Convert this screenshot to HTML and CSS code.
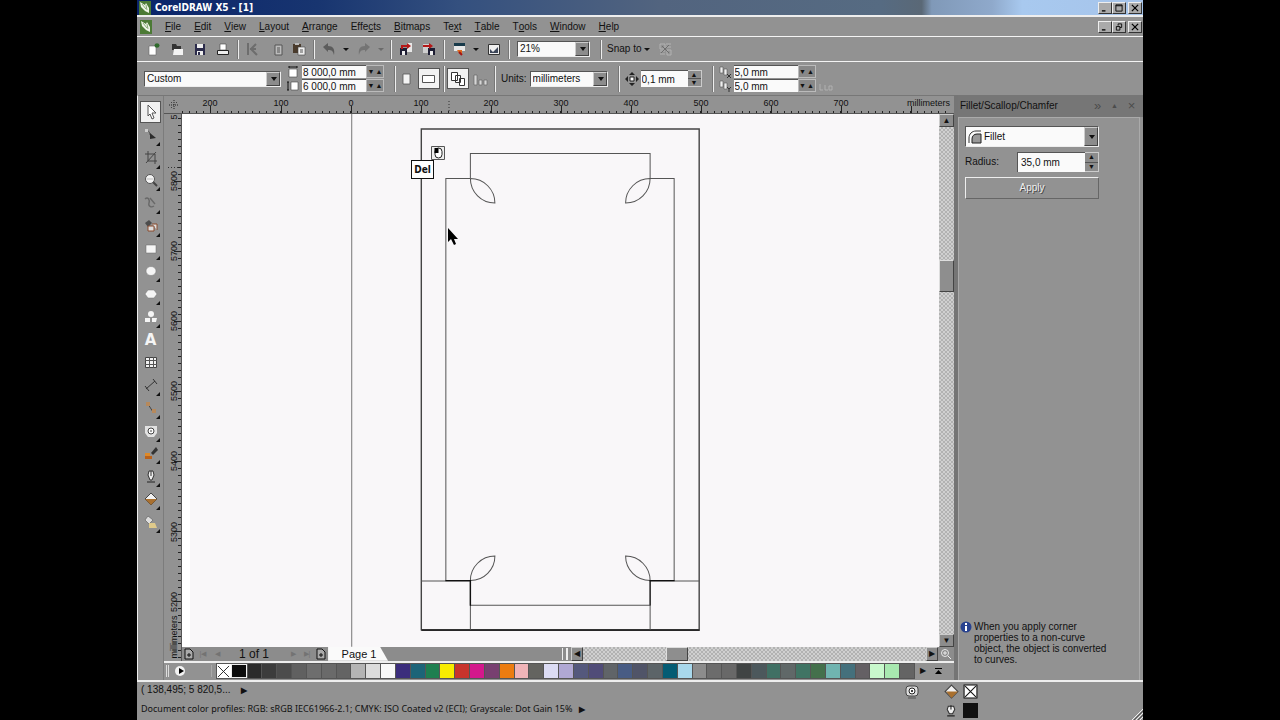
FILE: index.html
```html
<!DOCTYPE html>
<html lang="en">
<head>
<meta charset="utf-8">
<title>CorelDRAW X5 - [1]</title>
<link rel="stylesheet" href="styles.css">
</head>
<body>
<div class="app">
  <header class="titlebar">
    <svg class="logo" viewBox="0 0 12 14"><rect width="12" height="14" fill="#4c7a35"/><path d="M1 1l5 3 1-2 3 5v5l-4-2-4-4z" fill="#eef4e6"/><path d="M3 3l4 5M7 4l1 5" stroke="#5c8a46" stroke-width=".7" fill="none"/></svg>
    <h1>CorelDRAW X5 - [1]</h1>
    <div class="winbtns">
      <button aria-label="Minimize"><svg viewBox="0 0 9 9"><path d="M1 7h4v1.500H1z"/></svg></button>
      <button aria-label="Maximize"><svg viewBox="0 0 9 9"><path d="M1 1h7v7H1zM1 2h7" fill="none" stroke="#000"/></svg></button>
      <button class="close" aria-label="Close"><svg viewBox="0 0 9 9"><path d="M1 1l7 7M8 1l-7 7" stroke="#000" stroke-width="1.400"/></svg></button>
    </div>
  </header>

  <nav class="menubar">
    <svg class="logo" viewBox="0 0 12 14"><rect width="12" height="14" fill="#4c7a35"/><path d="M1 1l5 3 1-2 3 5v5l-4-2-4-4z" fill="#eef4e6"/><path d="M3 3l4 5M7 4l1 5" stroke="#5c8a46" stroke-width=".7" fill="none"/></svg>
    <button><u>F</u>ile</button><button><u>E</u>dit</button><button><u>V</u>iew</button><button><u>L</u>ayout</button><button><u>A</u>rrange</button><button>Effe<u>c</u>ts</button><button><u>B</u>itmaps</button><button>Te<u>x</u>t</button><button><u>T</u>able</button><button>T<u>o</u>ols</button><button><u>W</u>indow</button><button><u>H</u>elp</button>
    <div class="winbtns">
      <button aria-label="Minimize document"><svg viewBox="0 0 9 9"><path d="M1 7h4v1.500H1z"/></svg></button>
      <button aria-label="Restore document"><svg viewBox="0 0 9 9"><path d="M3.500 3V1h4v4h-2M1.500 4h4v4h-4z" fill="none" stroke="#000"/></svg></button>
      <button class="close" aria-label="Close document"><svg viewBox="0 0 9 9"><path d="M1 1l7 7M8 1l-7 7" stroke="#000" stroke-width="1.400"/></svg></button>
    </div>
  </nav>

  <div class="toolbar">
    <button class="tool" aria-label="New"><svg viewBox="0 0 16 16"><path d="M3 5h7v9H3z" fill="#fff" stroke="#666" stroke-width=".6"/><path d="M11 2v5M8.500 4.500h5M9 3l4 3M13 3L9 6" stroke="#2f6b2c" stroke-width="1.200"/></svg></button>
    <button class="tool" aria-label="Open"><svg viewBox="0 0 16 16"><path d="M3 3h4l1 2h4v4H3z" fill="#333"/><path d="M4 14l1-6h9v6z" fill="#f3f3f3"/></svg></button>
    <button class="tool" aria-label="Save"><svg viewBox="0 0 16 16"><path d="M3 3h10v11H3z" fill="#2b2b4a"/><path d="M5 3h6v4H5zM5 10h6v4H5z" fill="#eee"/><path d="M6 11h2v3H6z" fill="#2b2b4a"/></svg></button>
    <button class="tool" aria-label="Print"><svg viewBox="0 0 16 16"><path d="M5 3h6v6H5z" fill="#fff" stroke="#444" stroke-width=".6"/><path d="M2.500 9.500h11v4h-11z" fill="#eee" stroke="#222"/></svg></button>
    <i class="sep"></i>
    <button class="tool" aria-label="Cut"><svg viewBox="0 0 16 16"><path d="M3 2v12M5 8h6M11 3L6 8l6 6" stroke="#6d6d6d" stroke-width="2" fill="none"/></svg></button>
    <button class="tool" aria-label="Copy"><svg viewBox="0 0 16 16"><path d="M7 4h7v10H7z" fill="#bcbcbc" stroke="#555"/><path d="M9 7h3M9 9h3M9 11h3" stroke="#555"/></svg></button>
    <button class="tool" aria-label="Paste"><svg viewBox="0 0 16 16"><path d="M2 3h8v9H2z" fill="#4a3b2c"/><path d="M4 2h4v2H4z" fill="#bbb"/><path d="M7 6h7v8H7z" fill="#eee" stroke="#444" stroke-width=".6"/><path d="M9 9h3M9 11h3" stroke="#555"/></svg></button>
    <i class="sep"></i>
    <button class="tool" aria-label="Undo"><svg viewBox="0 0 16 16"><path d="M2 6l5-4v3c5 0 7 3 6 9-1-4-2-5-6-5v2z" fill="#5c5c5c"/></svg></button>
    <button class="drop" aria-label="Undo list"></button>
    <button class="tool" aria-label="Redo"><svg viewBox="0 0 16 16"><path d="M14 6L9 2v3C4 5 2 8 3 14c1-4 2-5 6-5v2z" fill="#747474"/></svg></button>
    <button class="drop faint" aria-label="Redo list"></button>
    <i class="sep"></i>
    <button class="tool" aria-label="Import"><svg viewBox="0 0 16 16"><path d="M9 2h5v9H9" fill="#e8e8e8"/><path d="M2 7h7v7H2z" fill="#1d1d33"/><path d="M4 10h3v4H4z" fill="#eee"/><path d="M3 4h6V2l4 3-4 3V6H5v2H3z" fill="#b51717"/></svg></button>
    <button class="tool" aria-label="Export"><svg viewBox="0 0 16 16"><path d="M2 3h6v9H2z" fill="#cfcfcf"/><path d="M7 7h7v7H7z" fill="#1d1d33"/><path d="M9 10h3v4H9z" fill="#eee"/><path d="M2 4h6V2l4 3-4 3V6H2z" fill="#b51717"/></svg></button>
    <i class="sep"></i>
    <button class="tool" aria-label="Application launcher"><svg viewBox="0 0 16 16"><path d="M3 2h11v8H3z" fill="#e6e6e6"/><path d="M3 2h11v3H3z" fill="#183a4a"/><path d="M6 9h5v5L8 12z" fill="#e06a1b"/><path d="M8 11l3 3" stroke="#a31515" stroke-width="2"/></svg></button>
    <button class="drop" aria-label="Launcher list"></button>
    <button class="tool" aria-label="Welcome screen"><svg viewBox="0 0 16 16"><path d="M2.500 3.500h11v10h-11z" fill="#eee" stroke="#333"/><path d="M4 8l3 3 5-5v6H4z" fill="#3c4659"/></svg></button>
    <i class="sep"></i>
    <span class="combo zoom"><select aria-label="Zoom level"><option>21%</option></select></span>
    <i class="sep wide"></i>
    <button class="snap">Snap to</button>
    <button class="drop" aria-label="Snap list"></button>
    <button class="tool" aria-label="Options"><svg viewBox="0 0 16 16"><path d="M3 3h5v5H3zM9 3h5M9 6h5M3 10h5M3 13h5M10 9h4v5h-4z" fill="none" stroke="#b2b2b2"/><path d="M5 5l7 7M12 4l-8 8" stroke="#6d6d6d"/></svg></button>
  </div>

  <div class="propbar">
    <span class="combo custom"><select aria-label="Page size"><option>Custom</option></select></span>
    <div class="pair">
      <label class="num"><svg viewBox="0 0 12 12"><path d="M2 3h8v8H2z" fill="#fff" stroke="#444" stroke-width=".6"/><path d="M2 1h8M2 0v2M10 0v2" stroke="#111"/></svg><input value="8 000,0 mm" aria-label="Page width"><span class="flat"><button aria-label="Decrease width">▼</button><button aria-label="Increase width">▲</button></span></label>
      <label class="num"><svg viewBox="0 0 12 12"><path d="M4 2h7v8H4z" fill="#fff" stroke="#444" stroke-width=".6"/><path d="M1 2v8M0 2h2M0 10h2" stroke="#111"/></svg><input value="6 000,0 mm" aria-label="Page height"><span class="flat"><button aria-label="Decrease height">▼</button><button aria-label="Increase height">▲</button></span></label>
    </div>
    <i class="sep tall lead"></i>
    <button class="tool" aria-label="Portrait"><svg viewBox="0 0 16 16"><path d="M4 3h7v10H4z" fill="#f4f4f4" stroke="#555" stroke-width=".8"/></svg></button>
    <button class="tool pressed" aria-label="Landscape"><svg viewBox="0 0 16 16"><path d="M1.500 4.500h12v7h-12z" fill="#fff" stroke="#555"/></svg></button>
    <i class="sep tall"></i>
    <button class="tool pressed" aria-label="All pages"><svg viewBox="0 0 16 16"><path d="M1.500 1.500h6v8h-6zM5.500 4.500h5v7h-5zM9.500 7.500h5v7h-5z" fill="#fff" stroke="#333"/></svg></button>
    <button class="tool" aria-label="Current page"><svg viewBox="0 0 16 16"><path d="M2 4h3v10H2zM7 9h3v5H7zM12 9h3v5h-3z" fill="#d6d6d6" stroke="#666" stroke-width=".7"/></svg></button>
    <i class="sep tall"></i>
    <label class="units" for="units">Units:</label>
    <span class="combo unitbox"><select id="units"><option>millimeters</option></select></span>
    <i class="sep tall wide"></i>
    <label class="num nudge"><svg viewBox="0 0 14 14"><path d="M5 5h4v4H5z" fill="#fff" stroke="#222"/><path d="M7 0l3 3H4zM7 14l3-3H4zM0 7l3-3v6zM14 7l-3-3v6z" fill="#222"/></svg><input value="0,1 mm" aria-label="Nudge distance"><span class="stack"><button aria-label="Increase nudge">▲</button><button aria-label="Decrease nudge">▼</button></span></label>
    <i class="sep tall wide"></i>
    <div class="pair dup">
      <label class="num"><svg viewBox="0 0 12 12"><path d="M1 1h3v6H1zM5 3h3v6H5z" fill="#eee" stroke="#555" stroke-width=".6"/><path d="M8 8l4 4M12 8l-4 4" stroke="#333"/></svg><input value="5,0 mm" aria-label="Duplicate distance X"><span class="flat"><button aria-label="Decrease X">▼</button><button aria-label="Increase X">▲</button></span></label>
      <label class="num"><svg viewBox="0 0 12 12"><path d="M1 1h3v6H1zM5 3h3v6H5z" fill="#eee" stroke="#555" stroke-width=".6"/><path d="M8 7l2 2 2-2M10 9v3" stroke="#333" fill="none"/></svg><input value="5,0 mm" aria-label="Duplicate distance Y"><span class="flat"><button aria-label="Decrease Y">▼</button><button aria-label="Increase Y">▲</button></span></label>
    </div>
    <svg class="treat" viewBox="0 0 14 8"><path d="M1 1v6h3M6 2v5h3M10 3h3v4h-3z" fill="none" stroke="#b0b0b0"/></svg>
  </div>

  <div class="main">
    <div class="work">
      <aside class="toolbox">
        <button class="tool pressed" aria-label="Pick"><svg viewBox="0 0 16 16"><path d="M5 1l8 8H9l2 5-2 1-2-5-2 2z" fill="#fff" stroke="#555"/></svg></button>
        <button class="tool fly" aria-label="Shape"><svg viewBox="0 0 16 16"><path d="M3 3c2 0 4 2 4 5" stroke="#555" fill="none"/><path d="M2 2h3v3H2z" fill="#ccc"/><path d="M7 6l6 5-6 1z" fill="#2c2c2c"/></svg></button>
        <button class="tool fly" aria-label="Crop"><svg viewBox="0 0 16 16"><path d="M2 4h10v10M5 1v10h9M3 13L13 2" stroke="#454545" fill="none"/></svg></button>
        <button class="tool fly" aria-label="Zoom"><svg viewBox="0 0 16 16"><path d="M9 9l5 5" stroke="#444" stroke-width="2"/><circle cx="7" cy="7" r="4.500" fill="#f2f2f2" stroke="#555"/><path d="M4 7h6" stroke="#bbb"/></svg></button>
        <button class="tool fly" aria-label="Freehand"><svg viewBox="0 0 16 16"><path d="M2 4c3-3 5 1 4 4s2 5 5 3M7 3l5 6" stroke="#696969" stroke-width="1.400" fill="none"/></svg></button>
        <button class="tool fly" aria-label="Smart fill"><svg viewBox="0 0 16 16"><path d="M2 5l4-3 3 3-4 4z" fill="#4c4c4c"/><path d="M5 8h6v5H5zM9 6h5v6" fill="#ddd" stroke="#8a4b2c"/></svg></button>
        <button class="tool fly" aria-label="Rectangle"><svg viewBox="0 0 16 16"><path d="M3 4h10v8H3z" fill="#f5f5f5" stroke="#666" stroke-width=".5"/></svg></button>
        <button class="tool fly" aria-label="Ellipse"><svg viewBox="0 0 16 16"><ellipse cx="8" cy="8" rx="5" ry="4.500" fill="#f5f5f5" stroke="#777" stroke-width=".5"/></svg></button>
        <button class="tool fly" aria-label="Polygon"><svg viewBox="0 0 16 16"><path d="M5 4h6l3 4-3 4H5L2 8z" fill="#f5f5f5" stroke="#777" stroke-width=".5"/></svg></button>
        <button class="tool fly" aria-label="Basic shapes"><svg viewBox="0 0 16 16"><circle cx="8" cy="5" r="3" fill="#f5f5f5"/><path d="M2 9h5v4H2zM9 9h5l-1 4H9z" fill="#f5f5f5"/></svg></button>
        <button class="tool glyph" aria-label="Text">A</button>
        <button class="tool" aria-label="Table"><svg viewBox="0 0 16 16"><path d="M2.500 3.500h11v10h-11z" fill="#f2f2f2" stroke="#444"/><path d="M2 6.500h12M2 10.500h12M6.500 3v11M10.500 3v11" stroke="#555"/></svg></button>
        <button class="tool fly" aria-label="Dimension"><svg viewBox="0 0 16 16"><path d="M3 12l9-8M2 9l4 5M10 2l4 5" stroke="#333" fill="none"/></svg></button>
        <button class="tool fly" aria-label="Connector"><svg viewBox="0 0 16 16"><path d="M5 4l5 8" stroke="#444"/><path d="M3 2h4v4H3zM9 9h4v4H9z" fill="#b6895c"/></svg></button>
        <button class="tool fly" aria-label="Interactive"><svg viewBox="0 0 16 16"><path d="M2 3h12v7l-3 4H5l-3-4z" fill="#e2e2e2"/><circle cx="8" cy="8" r="3" fill="#fff" stroke="#444"/><path d="M7 8h2" stroke="#444"/></svg></button>
        <button class="tool fly" aria-label="Eyedropper"><svg viewBox="0 0 16 16"><path d="M8 8l5-6 2 3-5 5z" fill="#333"/><path d="M2 8h5v6H2z" fill="#dd8a2a"/><path d="M2 11h7v3H2z" fill="#b9611b"/></svg></button>
        <button class="tool fly" aria-label="Outline"><svg viewBox="0 0 16 16"><path d="M6 3h4l1 4-2 5H7L5 7z" fill="#eee" stroke="#333"/><path d="M8 3v5" stroke="#333"/><path d="M4 14h8" stroke="#222"/></svg></button>
        <button class="tool fly" aria-label="Fill"><svg viewBox="0 0 16 16"><path d="M8 2l6 6-6 6-6-6z" fill="#f1f1f1" stroke="#444"/><path d="M2 8h12l-6 6z" fill="#a9702f"/></svg></button>
        <button class="tool fly" aria-label="Interactive fill"><svg viewBox="0 0 16 16"><path d="M5 2l5 4-4 4-4-4z" fill="#ddd" stroke="#555" stroke-width=".6"/><path d="M6 9h6l2 5H6z" fill="#dfca8b"/></svg></button>
      </aside>

      <section class="center">
        <div class="hruler">
          <svg viewBox="164 96 790 18" preserveAspectRatio="xMinYMin slice">
            <path d="M169 105h10M174 100v10M171 102l1 1M177 102l-1 1M171 108l1-1" stroke="#222" stroke-dasharray="1 1" fill="none"/>
            <path d="M182 112.500h768" stroke="#222" stroke-width="3" stroke-dasharray="1 6"/>
            <path d="M210.500 106v8M281.500 106v8M351.500 106v8M421.500 106v8M491.500 106v8M561.500 106v8M631.500 106v8M701.500 106v8M771.500 106v8M841.500 106v8M911.500 106v8" stroke="#222"/>
            <path d="M449 101v12" stroke="#333" stroke-dasharray="1 2"/>
            <g class="rulertext" text-anchor="middle"><text x="210" y="106">200</text><text x="281" y="106">100</text><text x="351" y="106">0</text><text x="421" y="106">100</text><text x="491" y="106">200</text><text x="561" y="106">300</text><text x="631" y="106">400</text><text x="701" y="106">500</text><text x="771" y="106">600</text><text x="841" y="106">700</text></g>
            <text class="rulertext" x="950" y="106" text-anchor="end">millimeters</text>
          </svg>
        </div>

        <div class="desk">
          <div class="vruler">
            <svg viewBox="164 114 18 546" preserveAspectRatio="xMinYMin slice">
              <path d="M179.500 118v540" stroke="#222" stroke-width="3" stroke-dasharray="1 6"/>
              <path d="M174 181.500h8M174 251.500h8M174 321.500h8M174 391.500h8M174 461.500h8M174 531.500h8M174 601.500h8" stroke="#222"/>
              <path d="M168 167.500h13" stroke="#333" stroke-dasharray="1 2"/>
              <g class="rulertext" text-anchor="middle"><text transform="translate(177 181) rotate(-90)">5800</text><text transform="translate(177 251) rotate(-90)">5700</text><text transform="translate(177 321) rotate(-90)">5600</text><text transform="translate(177 391) rotate(-90)">5500</text><text transform="translate(177 461) rotate(-90)">5400</text><text transform="translate(177 532) rotate(-90)">5300</text><text transform="translate(177 602) rotate(-90)">5200</text><text transform="translate(177 637) rotate(-90)">millimeters</text><text transform="translate(177 117) rotate(-90)">5</text></g>
            </svg>
          </div>
          <div class="view">
            <div class="viewtop">
              <div class="canvas">
                <svg class="drawing" viewBox="182 114 756 532" preserveAspectRatio="xMinYMin meet" fill="none" stroke="#555">
                  <path d="M351.500 114v532" stroke="#777"/>
                  <path d="M421 129h277.500v500H421z" stroke="#444" stroke-width="1.400"/>
                  <path d="M421 629.500h278" stroke="#000"/>
                  <path d="M470 178.500v-25h179.500v25h24v401.500M470 178.500h-24.500v401.500"/>
                  <path d="M470 178.500a24.500 24.500 0 0 0 24.500 24.500a24.500 24.500 0 0 0 -24.500 -24.500M649.500 178.500a24.500 24.500 0 0 1 -24.500 24.500a24.500 24.500 0 0 1 24.500 -24.500M470 580a24.500 24.500 0 0 1 24.500 -24.500a24.500 24.500 0 0 1 -24.500 24.500M649.500 580a24.500 24.500 0 0 0 -24.500 -24.500a24.500 24.500 0 0 0 24.500 24.500"/>
                  <path d="M421 580.500h49M649 580.500h50M470 580v49M649.500 605v24M470 604.500h179"/>
                  <path d="M445 580h25v25M674 580h-24.500v25" stroke="#111" stroke-width="1.400"/>
                </svg>
                <svg class="click" viewBox="0 0 14 14"><path d="M.5.5h13v13H.5z" fill="#eee" stroke="#555"/><rect x="4" y="2" width="7" height="10" rx="3.500" fill="#fff" stroke="#222"/><path d="M3.500 2h4v5h-4z"/></svg>
                <kbd class="key">Del</kbd>
                <svg class="cursor" viewBox="0 0 10 18"><path d="M0 0v14l3-3 3 6 2-1-2-5h4z"/></svg>
              </div>
              <div class="vscroll">
                <button aria-label="Scroll up">▲</button><div class="track"><div class="thumb"></div></div><button aria-label="Scroll down">▼</button>
              </div>
            </div>
            <div class="pagenav">
              <button class="addpage" aria-label="Add page before"><svg viewBox="0 0 12 12"><path d="M2 1h5l3 3v7H2zM4 7h4M6 5v4" fill="#aaa" stroke="#111"/></svg></button>
              <button class="step" aria-label="First page">|◀</button>
              <button class="step" aria-label="Previous page">◀</button>
              <span class="count">1 of 1</span>
              <button class="step" aria-label="Next page">▶</button>
              <button class="step" aria-label="Last page">▶|</button>
              <button class="addpage" aria-label="Add page after"><svg viewBox="0 0 12 12"><path d="M2 1h5l3 3v7H2zM4 7h4M6 5v4" fill="#aaa" stroke="#111"/></svg></button>
              <button class="tab">Page 1</button>
              <i class="grip"></i>
              <div class="hscroll">
                <button aria-label="Scroll left">◀</button><div class="track"><div class="thumb"></div></div><button aria-label="Scroll right">▶</button>
              </div>
              <button class="navigator" aria-label="Navigator"><svg viewBox="0 0 12 12"><circle cx="5" cy="5" r="3.500" fill="#888" stroke="#e8e8e8"/><path d="M3 5h4M5 3v4M8 8l3 3" stroke="#eee"/></svg></button>
            </div>
          </div>
        </div>

        <div class="palette">
          <div class="lead">
            <i class="bar"></i>
            <button aria-label="Palette menu"><svg viewBox="0 0 12 12"><circle cx="6" cy="6" r="5" fill="#f2f2f2"/><path d="M5 3l5 3-5 3z"/></svg></button>
            <i class="bar dim"></i>
          </div>
          <div class="swatches" id="swatches"></div>
          <button class="more" aria-label="Scroll colors">▶</button>
          <button class="more" aria-label="Expand palette"><svg viewBox="0 0 9 9"><path d="M1 1.500h7" stroke="#000"/><path d="M4.500 3L8 7H1z"/></svg></button>
        </div>
      </section>
    </div>

    <aside class="docker">
      <header>
        <h2>Fillet/Scallop/Chamfer</h2>
        <button aria-label="Collapse">»</button><button class="up" aria-label="Roll up">▲</button><button aria-label="Close docker">×</button>
      </header>
      <div class="panel">
        <form>
          <span class="combo mode"><svg viewBox="0 0 14 14"><path d="M1 13V8c0-4 3-7 7-7h5" fill="none" stroke="#333"/><path d="M4 13V9c0-3 2-5 5-5h4v9z" fill="#999" stroke="#222"/></svg><select aria-label="Corner type"><option>Fillet</option></select></span>
          <div class="radius"><label for="radius">Radius:</label><span class="num"><input id="radius" value="35,0 mm"><span class="stack"><button type="button" aria-label="Increase radius">▲</button><button type="button" aria-label="Decrease radius">▼</button></span></span></div>
          <button type="button" class="apply">Apply</button>
        </form>
        <div class="info">
          <svg viewBox="0 0 12 12"><circle cx="6" cy="6" r="5.500" fill="#27418f"/><path d="M5 5h2v5H5zM5 2h2v2H5z" fill="#fff"/></svg>
          <p>When you apply corner<br>properties to a non-curve<br>object, the object is converted<br>to curves.</p>
        </div>
      </div>
    </aside>
  </div>

  <footer class="status">
    <div class="msgs">
      <p><span class="coords">( 138,495; 5 820,5...</span> <b>▶</b></p>
      <p class="profiles">Document color profiles: RGB: sRGB IEC61966-2.1; CMYK: ISO Coated v2 (ECI); Grayscale: Dot Gain 15% <b>▶</b></p>
    </div>
    <svg class="proof" viewBox="0 0 14 14"><rect x="1" y="1" width="12" height="10" rx="3" fill="#ddd" stroke="#444"/><circle cx="7" cy="6" r="3" fill="#fff" stroke="#222"/><circle cx="7" cy="6" r="1"/><path d="M3 13h8" stroke="#555"/></svg>
    <div class="inks">
      <svg viewBox="0 0 14 14"><path d="M7 1l6 6-6 6-6-6z" fill="#f1f1f1" stroke="#444"/><path d="M2 7h11l-6 6z" fill="#a9702f"/></svg>
      <svg viewBox="0 0 14 14"><path d="M1 1h12v12H1z" fill="#fff" stroke="#111"/><path d="M2 2l10 10M12 2L2 12" stroke="#111"/></svg>
      <svg viewBox="0 0 14 14"><path d="M4 3h5l1 3-2 4H5L3 6z" fill="#eee" stroke="#333"/><path d="M6.500 2v4M3 12h7" stroke="#222"/></svg>
      <svg viewBox="0 0 14 14"><path d="M0 0h14v14H0z" fill="#111"/></svg>
    </div>
    <svg class="resize" viewBox="0 0 12 12"><path d="M1 12L12 1M5 12l7-7M9 12l3-3" stroke="#eee"/><path d="M3 12l9-9M7 12l5-5" stroke="#555"/></svg>
  </footer>
</div>
<script src="palette.js"></script>
</body>
</html>
```

FILE: palette.js
```js
const colors = ["none", "#0c0c0c", "#2b2b2b", "#3c3c3c", "#4c4c4c", "#606060", "#6e6e6e", "#6a6a6a", "#646464", "#b4b4b4", "#dcdcdc", "#f8f8f8",
  "#3b2d7c", "#1c6478", "#1e7f50", "#f8ec00", "#c8342c", "#d4188c", "#784070", "#ec7c10", "#f0b4b8", "#646460", "#dcdcf4", "#b0a8d4",
  "#54587c", "#504c78", "#606468", "#485c84", "#505468", "#5c6468", "#045c74", "#a8d8ec", "#8c8c8c", "#6c6c6c", "#686868", "#404444",
  "#4c585c", "#407064", "#606868", "#407464", "#44704c", "#70b4b0", "#44707c", "#646064", "#c8f8cc", "#a8e8b0", "#646464"];
const row = document.getElementById("swatches");
for (const color of colors) {
  const swatch = document.createElement("button");
  swatch.setAttribute("aria-label", color === "none" ? "No color" : color);
  if (color === "none") {
    swatch.className = "nocolor";
    swatch.innerHTML = '<svg viewBox="0 0 14 14"><path d="M1 1l12 12M13 1L1 13" stroke="#222"/></svg>';
  } else {
    swatch.style.background = color;
  }
  row.append(swatch);
}
```

FILE: styles.css
```css
* { box-sizing: border-box; }
body { margin: 0; background: #000; color: #111; font: 10px/12px "Liberation Sans", Arial, sans-serif; }
button, input, select { font: inherit; color: inherit; margin: 0; padding: 0; border: 0; border-radius: 0; background: none; appearance: none; min-width: 0; }
button { display: flex; align-items: center; justify-content: center; }
h1, h2, p { margin: 0; font-size: inherit; font-weight: normal; }
svg { display: block; flex: none; }

.app { display: flex; flex-direction: column; min-height: 100vh; margin: 0 137px; background: #929292; border-bottom: 1px solid #f4f4f4; }

.titlebar { display: flex; align-items: center; gap: 4px; height: 15px; padding: 0 1px 0 2px; color: #fff;
  background: linear-gradient(90deg, #0a246a 0%, #183570 18%, #34507f 32%, #52647f 52%, #566b82 74%, #5a6876 78%, #8099b8 79%, #8fa9cb 85%, #a8c9ef 88%, #a6c4ea 100%); }
.titlebar h1 { flex: 1; font: bold 10px/14px "DejaVu Sans Condensed", "DejaVu Sans", sans-serif; }
.logo { width: 12px; height: 14px; }
.winbtns { display: flex; }
.winbtns button { width: 14px; height: 12px; background: #aaa; border: 1px solid; border-color: #eee #333 #333 #eee; }
.winbtns .close { margin-left: 2px; }
.winbtns svg { width: 8px; height: 8px; }

.menubar { display: flex; align-items: center; height: 22px; padding: 0 1px 0 3px; border-top: 2px solid #eee; border-bottom: 1px solid #f4f4f4; }
.menubar > button { margin-right: 13px; height: 16px; }
.menubar .logo { margin-right: 13px; }
.menubar u { text-underline-offset: 1px; }
.menubar .winbtns { margin-left: auto; }

.toolbar, .propbar { display: flex; align-items: center; padding: 0 5px; }
.toolbar { height: 25px; border-bottom: 1px solid #f4f4f4; }
.propbar { height: 33px; padding-left: 7px; }
.tool { position: relative; width: 23px; height: 21px; flex: none; }
.propbar .tool { width: 22px; }
.tool svg { width: 16px; height: 16px; }
.pressed { background: #f2f2f2; border: 1px solid #555; }
.sep { width: 2px; height: 19px; margin: 0 2px 0 3px; background: #eee; border-left: 1px solid #777; flex: none; }
.sep.tall { height: 26px; }
.sep.wide { margin: 0 5px 0 10px; }
.propbar .sep.lead { margin: 0 0 0 10px; }
.drop { width: 12px; height: 16px; flex: none; }
.drop::after { content: ""; border: 3px solid transparent; border-top-color: #111; border-bottom: 0; }
.drop.faint { opacity: .3; }
.snap { height: 16px; }

.combo { position: relative; display: flex; align-items: center; height: 16px; background: #fafafa; border: 1px solid; border-color: #555 #eee #eee #555; }
.combo select { width: 100%; height: 14px; padding-left: 2px; }
.combo::before { content: ""; position: absolute; right: 0; top: 0; bottom: 0; width: 12px; background: #8c8c8c; border: 1px solid; border-color: #ccc #444 #444 #ccc; pointer-events: none; }
.combo::after { content: ""; position: absolute; right: 3px; top: 50%; margin-top: -2px; border: 3px solid transparent; border-top: 4px solid #111; border-bottom: 0; pointer-events: none; }
.combo.zoom { width: 73px; margin-left: 5px; }
.combo.custom { width: 137px; }
.combo.unitbox { width: 78px; margin-left: 3px; }
.units { margin-left: 3px; }

.pair { display: flex; flex-direction: column; gap: 1px; margin-left: 6px; }
.num { display: flex; align-items: center; gap: 3px; }
.num svg { width: 12px; height: 12px; }
.num input { width: 64px; height: 13px; padding: 0 1px; background: #fafafa; border-top: 1px solid #555; }
.num .flat { display: flex; height: 13px; margin-left: -3px; background: #888; border: 1px solid #bbb; }
.flat button { width: 8px; font-size: 7px; line-height: 8px; }
.num.nudge { gap: 2px; }
.nudge svg { width: 14px; height: 14px; }
.nudge input { width: 48px; height: 17px; }
.stack { display: flex; flex-direction: column; align-self: stretch; margin-left: -3px; width: 14px; background: #666; border: 1px solid #ccc; border-left: 0; }
.stack button { flex: 1; font-size: 7px; line-height: 6px; background: #8c8c8c; }
.stack button + button { border-top: 1px solid #555; }
.pair.dup { margin-left: 0; }
.treat { width: 14px; height: 8px; margin: 16px 0 0 3px; }

.main { display: flex; flex: 1; border-bottom: 2px solid #eee; }
.work { display: flex; flex: 1; min-width: 0; border-top: 1px solid #777; border-left: 1px solid #eee; }
.toolbox { display: flex; flex-direction: column; justify-content: space-between; align-items: center; width: 25px; height: 437px; padding-top: 5px; flex: none; }
.toolbox .tool { width: 21px; height: 22px; }
.fly::after { content: ""; position: absolute; right: 1px; bottom: 0; border: 2px solid; border-color: transparent #111 #111 transparent; }
.glyph { font: bold 15px/20px "DejaVu Sans", sans-serif; color: #f5f5f5; }

.center { display: flex; flex-direction: column; flex: 1; min-width: 0; border-left: 1px solid #7c7c7c; }
.hruler { height: 18px; border-bottom: 1px solid #555; overflow: hidden; }
.hruler svg { width: 100%; height: 18px; }
.rulertext { font: 9px "Liberation Sans", Arial, sans-serif; fill: #111; }
.desk { display: flex; flex: 1; min-height: 0; }
.vruler { width: 18px; border-right: 1px solid #555; overflow: hidden; flex: none; }
.vruler svg { width: 18px; height: 546px; }
.view { display: flex; flex-direction: column; flex: 1; min-width: 0; }
.viewtop { display: flex; flex: 1; }
.canvas { position: relative; flex: 1; background: #f9f7f9; border: 0 solid #fff; border-left-width: 8px; overflow: hidden; }
.drawing { width: calc(100% + 8px); margin-left: -8px; }
.key { position: absolute; left: 221px; top: 46px; width: 23px; height: 19px; border: 1px solid #111; background: #fff; font: bold 10px/17px "DejaVu Sans Condensed", "DejaVu Sans", sans-serif; text-align: center; }
.click { position: absolute; left: 241px; top: 32px; width: 14px; height: 14px; }
.cursor { position: absolute; left: 258px; top: 114px; width: 10px; height: 18px; }

.vscroll { display: flex; flex-direction: column; width: 15px; flex: none; }
.vscroll button, .hscroll button { width: 15px; height: 13px; background: #8c8c8c; border: 1px solid; border-color: #ccc #444 #444 #ccc; font-size: 8px; line-height: 9px; flex: none; }
.track { flex: 1; background: repeating-conic-gradient(#b2b2b2 0 25%, #d0d0d0 0 50%) 0 0 / 4px 4px; }
.thumb { background: #8e8e8e; border: 1px solid; border-color: #ddd #444 #444 #ddd; }
.vscroll .track { padding-top: 133px; }
.vscroll .thumb { height: 32px; }
.pagenav { display: flex; align-items: center; height: 14px; background: #8c8c8c; }
.addpage { width: 14px; }
.addpage svg, .navigator svg { width: 12px; height: 12px; }
.step { width: 14px; color: #737373; font-size: 7px; }
.count { padding: 0 17px 0 15px; font-size: 12px; line-height: 14px; }
.tab { width: 60px; height: 14px; padding-left: 2px; background: #fafafa; font-size: 11px; clip-path: polygon(0 0, 52px 0, 100% 100%, 0 100%); }
.grip { width: 6px; height: 12px; margin: 0 3px 0 auto; border: 1px solid #eee; border-width: 0 2px 0 1px; }
.hscroll { display: flex; width: 367px; }
.hscroll button { width: 12px; height: 14px; }
.hscroll .track { padding-left: 83px; }
.hscroll .thumb { width: 22px; height: 14px; }
.navigator { width: 16px; }

.palette { display: flex; align-items: center; height: 19px; border-top: 2px solid #eee; }
.palette .lead { display: flex; align-items: center; width: 52px; padding: 0 2px; gap: 5px; }
.lead button svg { width: 12px; height: 12px; }
.bar { width: 3px; height: 12px; border: 1px solid #ddd; border-width: 0 1px; }
.bar.dim { margin-left: auto; border-color: #aaa; border-right: 0; }
.swatches { display: flex; flex: 1; height: 16px; border: 1px solid #555; border-left: 0; }
.swatches button { flex: 1; border-left: 1px solid #555; }
.swatches .nocolor { background: #fff; }
.nocolor svg { width: 13px; height: 13px; }
.swatches button:nth-child(2) { border: 1px solid #eee; }
.more { width: 16px; font-size: 8px; }
.more + .more { width: 23px; padding-right: 8px; }
.more svg { width: 9px; height: 9px; }

.docker { display: flex; flex-direction: column; width: 189px; border-left: 4px solid #757575; flex: none; }
.docker header { display: flex; align-items: center; height: 22px; padding: 0 3px 0 2px; background: #767676; }
.docker h2 { flex: 1; }
.docker header button { width: 17px; color: #4c4c4c; font-size: 13px; }
.docker header .up { font-size: 7px; }
.panel { display: flex; flex-direction: column; justify-content: space-between; flex: 1; margin-right: 3px; padding: 8px 6px 15px; border: 1px solid #aaa; border-width: 1px 1px 0; }
.panel form { display: flex; flex-direction: column; gap: 5px; width: 134px; }
.combo.mode { height: 21px; }
.mode svg { width: 14px; height: 14px; margin-left: 2px; }
.mode select { height: 19px; }
.radius { display: flex; align-items: center; justify-content: space-between; }
.radius input { width: 68px; height: 20px; padding-left: 3px; border-left: 1px solid #555; }
.apply { height: 22px; border: 1px solid; border-color: #eee #666 #666 #eee; color: #eee; text-shadow: 1px 1px #444; }
.info { display: flex; gap: 2px; margin-left: -5px; }
.info svg { width: 12px; height: 12px; }
.info p { line-height: 11px; white-space: nowrap; }

.status { display: flex; height: 38px; padding: 0 0 0 4px; }
.msgs { display: flex; flex-direction: column; justify-content: space-between; flex: 1; padding: 2px 0 5px; }
.msgs b { font-size: 8px; margin-left: 4px; }
.profiles { font-family: "Noto Sans", "Liberation Sans", sans-serif; font-size: 9px; }
.coords { display: inline-block; width: 93px; }
.proof { width: 14px; height: 14px; margin: 3px 25px 0 0; }
.inks { display: grid; grid-template-columns: 15px 15px; gap: 4px 4px; align-content: start; padding-top: 2px; }
.inks svg { width: 15px; height: 15px; }
.resize { width: 12px; height: 12px; margin: auto 0 0 153px; }
```
